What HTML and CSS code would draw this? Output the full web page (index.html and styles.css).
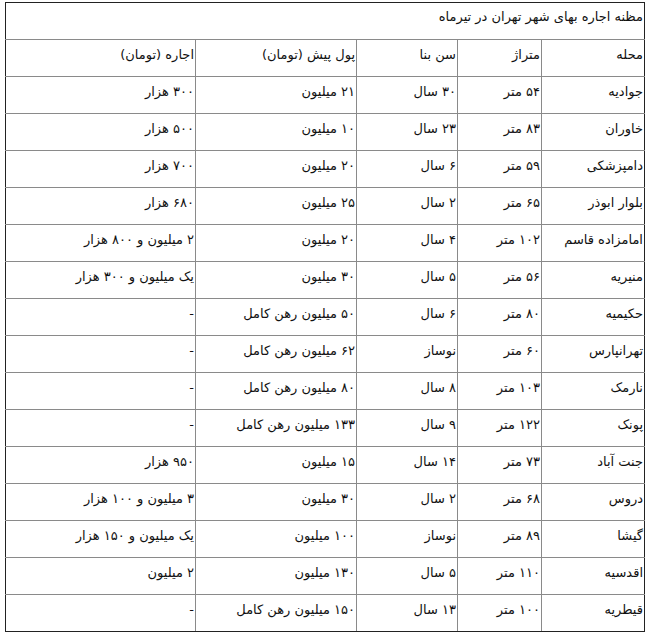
FILE: index.html
```html
<!DOCTYPE html>
<html lang="fa" dir="rtl">
<head>
<meta charset="utf-8">
<link rel="stylesheet" href="styles.css">
</head>
<body>
<table class="rent">
<colgroup>
<col class="c1"><col class="c2"><col class="c3"><col class="c4"><col class="c5">
</colgroup>
<tbody>
<tr><td colspan="5">مظنه اجاره بهای شهر تهران در تیرماه</td></tr>
<tr><td>محله</td><td>متراژ</td><td>سن بنا</td><td>پول پیش (تومان)</td><td>اجاره (تومان)</td></tr>
<tr><td>جوادیه</td><td>۵۴ متر</td><td>۳۰ سال</td><td>۲۱ میلیون</td><td>۳۰۰ هزار</td></tr>
<tr><td>خاوران</td><td>۸۳ متر</td><td>۲۳ سال</td><td>۱۰ میلیون</td><td>۵۰۰ هزار</td></tr>
<tr><td>دامپزشکی</td><td>۵۹ متر</td><td>۶ سال</td><td>۲۰ میلیون</td><td>۷۰۰ هزار</td></tr>
<tr><td>بلوار ابوذر</td><td>۶۵ متر</td><td>۲ سال</td><td>۲۵ میلیون</td><td>۶۸۰ هزار</td></tr>
<tr><td>امامزاده قاسم</td><td>۱۰۲ متر</td><td>۴ سال</td><td>۲۰ میلیون</td><td>۲ میلیون و ۸۰۰ هزار</td></tr>
<tr><td>منیریه</td><td>۵۶ متر</td><td>۵ سال</td><td>۳۰ میلیون</td><td>یک میلیون و ۳۰۰ هزار</td></tr>
<tr><td>حکیمیه</td><td>۸۰ متر</td><td>۶ سال</td><td>۵۰ میلیون رهن کامل</td><td>-</td></tr>
<tr><td>تهرانپارس</td><td>۶۰ متر</td><td>نوساز</td><td>۶۲ میلیون رهن کامل</td><td>-</td></tr>
<tr><td>نارمک</td><td>۱۰۳ متر</td><td>۸ سال</td><td>۸۰ میلیون رهن کامل</td><td>-</td></tr>
<tr><td>پونک</td><td>۱۲۲ متر</td><td>۹ سال</td><td>۱۳۳ میلیون رهن کامل</td><td>-</td></tr>
<tr><td>جنت آباد</td><td>۷۳ متر</td><td>۱۴ سال</td><td>۱۵ میلیون</td><td>۹۵۰ هزار</td></tr>
<tr><td>دروس</td><td>۶۸ متر</td><td>۲ سال</td><td>۳۰ میلیون</td><td>۳ میلیون و ۱۰۰ هزار</td></tr>
<tr><td>گیشا</td><td>۸۹ متر</td><td>نوساز</td><td>۱۰۰ میلیون</td><td>یک میلیون و ۱۵۰ هزار</td></tr>
<tr><td>اقدسیه</td><td>۱۱۰ متر</td><td>۵ سال</td><td>۱۳۰ میلیون</td><td>۲ میلیون</td></tr>
<tr><td>قیطریه</td><td>۱۰۰ متر</td><td>۱۳ سال</td><td>۱۵۰ میلیون رهن کامل</td><td>-</td></tr>
</tbody>
</table>
</body>
</html>
```
FILE: styles.css
```css
html, body {
  margin: 0;
  padding: 0;
  background: #fff;
}
body {
  padding: 2px 9px 0 7px;
  font-family: "DejaVu Sans", sans-serif;
  font-size: 13px;
  color: #111;
}
.rent {
  width: 639px;
  border-collapse: collapse;
  table-layout: fixed;
  border: 1px solid #222;
}
.rent .c1 { width: 103px; }
.rent .c2 { width: 84px; }
.rent .c3 { width: 101px; }
.rent .c4 { width: 161px; }
.rent .c5 { width: 190px; }
.rent td {
  border: 1px solid #8a8a8a;
  height: 37px;
  padding: 6px 1px 0 1px;
  vertical-align: top;
  text-align: right;
  white-space: nowrap;
  line-height: 17px;
  box-sizing: border-box;
}
.rent tr:first-child td {
  border-top-color: #222;
  padding-top: 5px;
}
.rent tr td:first-child {
  border-right-color: #222;
}
.rent tr td:last-child {
  border-left-color: #222;
}
.rent tr:last-child td {
  border-bottom-color: #222;
}
.rent tr:first-child td:first-child {
  border-left-color: #222;
}
```
